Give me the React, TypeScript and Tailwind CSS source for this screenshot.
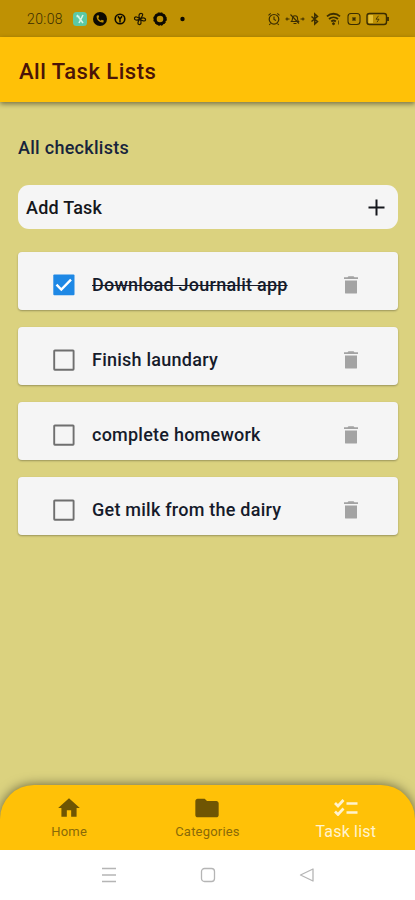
import { useState } from "react"
import { MdFolder, MdHome } from "react-icons/md"

const initialTasks = [
  { id: 1, title: "Download Journalit app", done: true },
  { id: 2, title: "Finish laundary", done: false },
  { id: 3, title: "complete homework", done: false },
  { id: 4, title: "Get milk from the dairy", done: false },
]

const StatusBar = () => (
  <div className="flex h-[37px] shrink-0 items-center justify-between bg-[#bf9103] pl-[27px] pr-[26px] text-[#3b2d02]">
    <div className="flex h-full items-center">
      <span className="w-[45px] pt-px text-[14px] font-light tracking-[0.4px]">20:08</span>
      <svg width="116" height="16" viewBox="0 0 116 16" fill="none">
        {/* app badge */}
        <rect x="1" y="1" width="14" height="14" rx="3.5" fill="#5cc9a4" />
        <path d="M5 4l6 8M11 4L7 12M4.5 5.5h3" stroke="#d8f7e8" strokeWidth="1.6" />
        {/* phone */}
        <circle cx="28" cy="8" r="7" fill="#0d0a02" />
        <path d="M24.7 4.8c-.6 3.7 2.7 7.2 6.7 6.7l.4-1.9-2.1-.9-1 1c-1.3-.6-2-1.4-2.5-2.6l1-1-.8-2z" fill="#bf9103" />
        {/* Y badge */}
        <circle cx="48" cy="8" r="4.8" stroke="#0d0a02" strokeWidth="1.6" />
        <path d="M46 5.2l2 2.8 2-2.8M48 8v3.5" stroke="#0d0a02" strokeWidth="1.5" />
        {/* fan */}
        <path
          d="M68 8C66 5 67 2.2 69.5 2.5S70 6 68 8c3.5-2 6-.8 5.5 1S70 10 68 8c2 3 1 6-1 5.5S66 10 68 8c-3.5 2-6 1-5.5-1S66 6 68 8z"
          stroke="#1c1502"
          strokeWidth="1.2"
        />
        {/* ring */}
        <circle cx="88" cy="8" r="4.8" stroke="#0d0a02" strokeWidth="3" />
        <circle cx="88" cy="8" r="6.3" stroke="#0d0a02" strokeWidth="1" strokeDasharray="2 1.3" />
        <circle cx="110.5" cy="8" r="2.2" fill="#0d0a02" />
      </svg>
    </div>

    <svg width="122" height="16" viewBox="0 0 122 16" fill="none" stroke="#3b2d02">
      {/* alarm */}
      <circle cx="7" cy="8.3" r="4.8" strokeWidth="1.2" />
      <path d="M7 5.5v3l2 1M1.5 4.3l2.2-2M12.5 4.3l-2.2-2M3.5 12.5l-1.2 1.5M10.5 12.5l1.2 1.5" strokeWidth="1.1" />
      {/* muted bell */}
      <path d="M24.5 10.5c1-1 1-2 1-3.5 0-3 5-3 5 0 0 1.5 0 2.5 1 3.5zM26.5 12.5h3M23.5 3.5l8.5 9M18.5 8h4M33.500 8h4M20 6.5v3M36 6.5v3" strokeWidth="1.1" />
      {/* bluetooth */}
      <path d="M44.5 5.5l6 5-2.7 2.5v-10l2.7 2.5-6 5" strokeWidth="1.5" />
      {/* wifi */}
      <path d="M60 5.3c3.8-3.4 9.2-3.4 13 0M62 8c2.6-2.3 6.4-2.3 9 0M64.3 10.5c1.4-1.2 3.1-1.2 4.5 0" strokeWidth="1.8" />
      <circle cx="66.5" cy="12.7" r="1" fill="#3b2d02" />
      <path d="M71.5 9.5v4" strokeWidth=".7" />
      {/* sim */}
      <rect x="81" y="2.5" width="12" height="11" rx="3" strokeWidth="1.1" />
      <path d="M85.5 6.5l3 3M88.5 6.5l-3 3" strokeWidth="1.6" />
      {/* battery */}
      <rect x="100" y="2.5" width="19.5" height="11" rx="2.5" strokeWidth="1.4" />
      <rect x="101.5" y="4" width="4.5" height="8" fill="#e2bd35" stroke="none" />
      <path d="M121 6v4" strokeWidth="1.8" />
      <path d="M111.5 4.8l-2.5 3.4h3l-2 3" strokeWidth=".8" />
    </svg>
  </div>
)

const Checkbox = ({ checked }: { checked: boolean }) => (
  <svg width="22" height="22" viewBox="0 0 22 22" fill="none">
    {checked ? (
      <>
        <rect x=".3" y=".5" width="21.2" height="20.7" rx="1" fill="#1e88e5" />
        <path d="M3.5 10.7l4.8 4.8L18 5.7" stroke="#fff" strokeWidth="2.4" />
      </>
    ) : (
      <rect x="1.200" y="1.5" width="19.4" height="19.2" rx=".6" stroke="#6f6f6f" strokeWidth="1.9" />
    )}
  </svg>
)

const TrashIcon = () => (
  <svg width="14" height="18" viewBox="0 0 14 18" fill="#a3a3a3">
    <path d="M0 1.3h3.5l1-1h5l1 1H14v1.7H0z" />
    <path d="M1 4.500h12v12.200c0 .5-.4.900-.9.900H1.900c-.5 0-.9-.4-.9-.900z" />
  </svg>
)

const App = () => {
  const [tasks, setTasks] = useState(initialTasks)

  const toggleTask = (id: number) =>
    setTasks(tasks.map((t) => (t.id === id ? { ...t, done: !t.done } : t)))

  const removeTask = (id: number) => setTasks(tasks.filter((t) => t.id !== id))

  return (
    <div className="flex h-[900px] w-[415px] flex-col overflow-hidden bg-[#dbd27f] font-[Roboto,sans-serif]">
      <StatusBar />

      {/* HEADER */}
      <header className="flex h-[65px] shrink-0 items-center bg-[#ffc107] pl-[19px] pt-[3px] shadow-[0_2px_5px_rgba(0,0,0,0.45)]">
        <h1 className="text-[22px] font-medium tracking-[0.5px] text-[#4b1408]">
          All Task Lists
        </h1>
      </header>

      {/* CONTENT */}
      <main className="flex-1 pl-[18px] pr-[17px] pt-[34px]">
        <h2 className="text-[18px] font-medium leading-6 tracking-[0.28px] text-[#17243c]">
          All checklists
        </h2>

        <button className="mt-[25px] flex h-11 w-full items-center justify-between rounded-[11px] bg-[#f5f5f5] pl-2 pr-[13px]">
          <span className="pt-px text-[18px] font-medium leading-6 tracking-[0.22px] text-[#15171c]">
            Add Task
          </span>
          <svg width="17" height="17" viewBox="0 0 17 17" stroke="#15171c" strokeWidth="2">
            <path d="M8.5 .5v16M.5 8.5h16" />
          </svg>
        </button>

        <ul className="mt-[23px] flex flex-col gap-[17px]">
          {tasks.map((task) => (
            <li
              key={task.id}
              className="flex h-[58px] items-center rounded-[4px] bg-[#f5f5f5] pl-[35px] pr-10 pt-[7px] shadow-[0_1px_2px_rgba(0,0,0,0.3)]"
            >
              <button onClick={() => toggleTask(task.id)}>
                <Checkbox checked={task.done} />
              </button>
              <span
                className={`ml-[17px] flex-1 text-[18px] font-medium tracking-[0.24px] text-[#161b2b] ${task.done ? "line-through decoration-1" : ""}`}
              >
                {task.title}
              </span>
              <button onClick={() => removeTask(task.id)}>
                <TrashIcon />
              </button>
            </li>
          ))}
        </ul>
      </main>

      {/* TABS */}
      <nav className="grid h-[65px] shrink-0 grid-cols-3 rounded-t-[34px] bg-[#ffc107] text-[13px] tracking-[0.2px] text-[#8a6a08] shadow-[0_0_12px_rgba(0,0,0,0.55)]">
        <a className="flex flex-col items-center pt-[10px]">
          <MdHome size={26} color="#6f5503" />
          <span className="mt-[1px] leading-5">Home</span>
        </a>
        <a className="flex flex-col items-center pt-[9px]">
          <MdFolder size={28} color="#6f5503" />
          <span className="leading-5">Categories</span>
        </a>
        <a className="flex flex-col items-center pt-[14px] text-[#fff3cf]">
          <svg width="24" height="17" viewBox="0 0 24 17" fill="none" stroke="currentColor" strokeWidth="2.7">
            <path d="M1 4l3 3 5.5-6M1 12.500l3 3 5.500-6M12.5 4.500h11M12.5 13.500h11" />
          </svg>
          <span className="mt-[6px] text-[16px] leading-5">Task list</span>
        </a>
      </nav>

      {/* SYSTEM BUTTONS */}
      <div className="flex h-[50px] shrink-0 items-center justify-center gap-[83px] bg-white">
        <svg width="16" height="16" viewBox="0 0 16 16" stroke="#b5b5b5" strokeWidth="1.4">
          <path d="M1 1.5h14M1 8h14M1 14.5h14" />
        </svg>
        <svg width="16" height="16" viewBox="0 0 16 16" fill="none" stroke="#b5b5b5" strokeWidth="1.3">
          <rect x="1.5" y="1.5" width="13" height="13" rx="3" />
        </svg>
        <svg width="16" height="16" viewBox="0 0 16 16" fill="none" stroke="#b5b5b5" strokeWidth="1.3" strokeLinejoin="round">
          <path d="M14 2v12L1.5 8z" />
        </svg>
      </div>
    </div>
  )
}

export default App
